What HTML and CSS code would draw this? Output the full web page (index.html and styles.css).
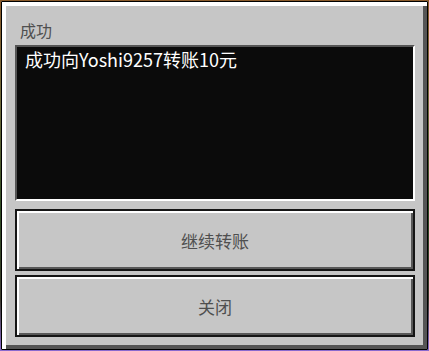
FILE: index.html
```html
<!DOCTYPE html>
<html lang="zh-CN">
<head>
<meta charset="utf-8">
<title>成功</title>
<link rel="stylesheet" href="styles.css">
</head>
<body>
  <div class="panel">
    <div class="title">成功</div>
    <div class="content">
      <p class="message">成功向Yoshi9257转账10元</p>
    </div>
    <div class="buttons">
      <button class="btn" type="button">继续转账</button>
      <button class="btn" type="button">关闭</button>
    </div>
  </div>
</body>
</html>
```

FILE: styles.css
```css
* {
  box-sizing: border-box;
}

html, body {
  margin: 0;
  padding: 0;
}

body {
  width: 429px;
  height: 351px;
  padding: 1px;
  overflow: hidden;
  background: linear-gradient(180deg, #8a5a2a 0%, #6f6a3a 30%, #2d4a22 60%, #3a3a2a 85%, #8a6ad0 100%);
  font-family: "Noto Sans CJK SC", "Noto Sans", sans-serif;
}

.panel {
  width: 427px;
  height: 349px;
  display: flex;
  flex-direction: column;
  padding: 0 12px 12px 13px;
  background: #c6c6c6;
  border: 1px solid #000;
  box-shadow: inset 4px 4px 0 #ffffff, inset -4px -4px 0 #555555;
  clip-path: polygon(1px 0, calc(100% - 1px) 0, 100% 1px, 100% calc(100% - 1px), calc(100% - 1px) 100%, 1px 100%, 0 calc(100% - 1px), 0 1px);
}

.title {
  height: 43px;
  padding: 20px 0 0 5px;
  font-size: 16px;
  line-height: 16px;
  color: #4f4f4f;
}

.content {
  height: 156px;
  background: #0b0b0b;
  border-style: solid;
  border-width: 2px;
  border-color: #555555 #ffffff #ffffff #555555;
  padding: 3px 8px;
}

.message {
  margin: 0;
  font-size: 18px;
  line-height: 18px;
  color: #ffffff;
}

.buttons {
  display: flex;
  flex-direction: column;
  gap: 4px;
  margin-top: 8px;
}

.btn {
  height: 62px;
  width: 100%;
  margin: 0;
  padding: 0;
  background: #c6c6c6;
  border: 2px solid #151515;
  box-shadow: inset 2px 2px 0 #ffffff, inset -2px -2px 0 #585858;
  font-family: "Noto Sans CJK SC", "Noto Sans", sans-serif;
  font-size: 17px;
  line-height: 17px;
  color: #4f4f4f;
  cursor: pointer;
}
```
